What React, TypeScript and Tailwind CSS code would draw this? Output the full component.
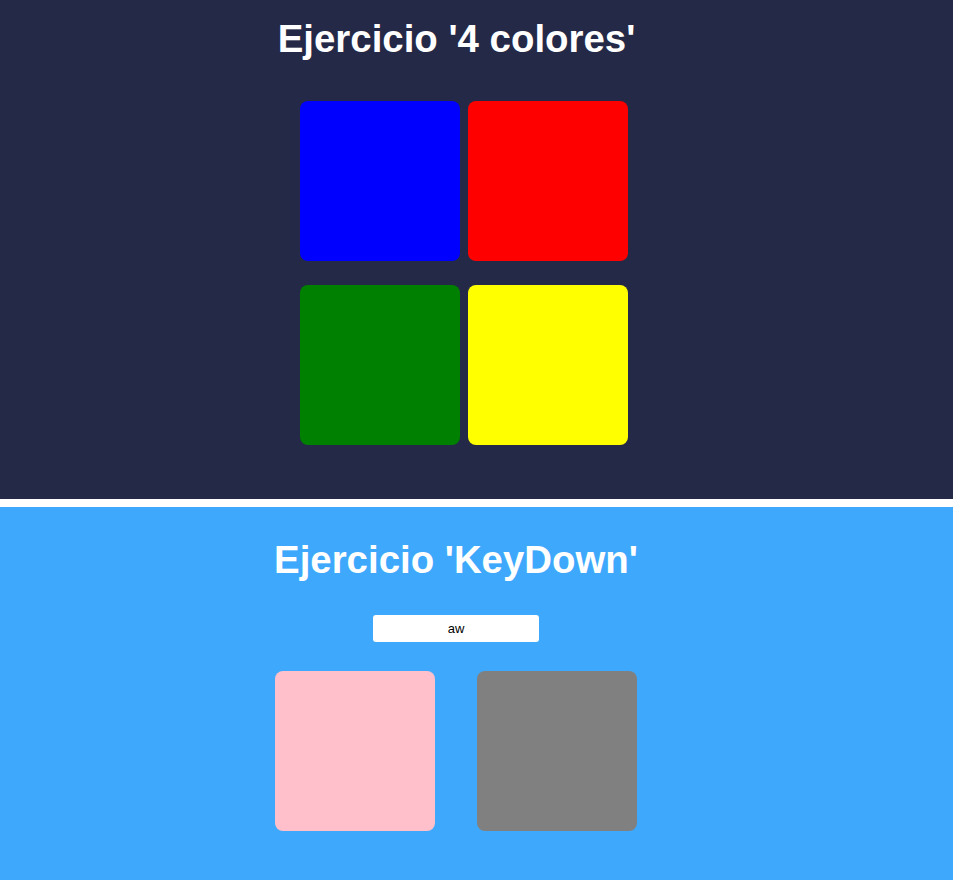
const App = () => {
  const colores = ['bg-[#0000ff]', 'bg-[#ff0000]', 'bg-[#008000]', 'bg-[#ffff00]'];

  return (
    <div className="min-h-screen bg-white font-['Liberation_Sans',Arial,sans-serif]">
      {/* Ejercicio 4 colores */}
      <section className="h-[499px] w-full bg-[#242947]">
        <div className="flex w-[913px] flex-col items-center">
          <h1 className="mt-[19px] text-[2.4rem] leading-[40px] font-bold text-white">
            Ejercicio '4 colores'
          </h1>
          <div className="mt-[42px] ml-[15px] grid grid-cols-[160px_160px] gap-x-2 gap-y-6">
            {colores.map((color, index) => (
              <div key={index} className={`h-40 w-40 rounded-lg ${color}`} />
            ))}
          </div>
        </div>
      </section>

      <div className="h-2 bg-white" />

      {/* Ejercicio KeyDown */}
      <section className="h-[373px] w-full bg-[#3ea9fc]">
        <div className="flex w-[912px] flex-col items-center">
          <h1 className="mt-[33px] text-[2.4rem] leading-[40px] font-bold text-white">
            Ejercicio 'KeyDown'
          </h1>
          <input
            type="text"
            defaultValue="aw"
            className="mt-[35px] h-[27px] w-[166px] rounded-[3px] bg-white text-center text-[13px] text-black outline-none"
          />
          <div className="mt-[29px] flex gap-[42px]">
            <div className="h-40 w-40 rounded-lg bg-[#ffc0cb]" />
            <div className="h-40 w-40 rounded-lg bg-[#808080]" />
          </div>
        </div>
      </section>
    </div>
  );
};

export default App;
